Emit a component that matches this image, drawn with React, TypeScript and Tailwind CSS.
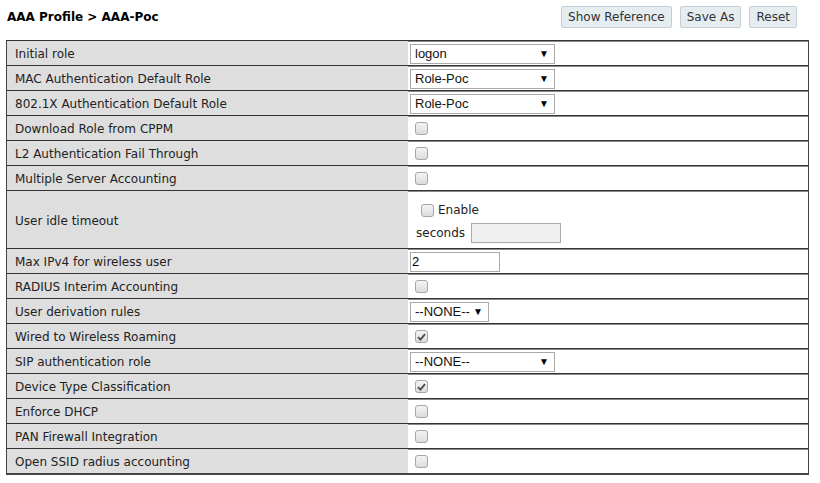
import React from 'react';

type Kind =
  | { t: 'select'; value: string; w: number }
  | { t: 'check'; checked?: boolean }
  | { t: 'input'; value: string }
  | { t: 'idle' };

const rows: { label: string; kind: Kind }[] = [
  { label: 'Initial role', kind: { t: 'select', value: 'logon', w: 145 } },
  { label: 'MAC Authentication Default Role', kind: { t: 'select', value: 'Role-Poc', w: 145 } },
  { label: '802.1X Authentication Default Role', kind: { t: 'select', value: 'Role-Poc', w: 145 } },
  { label: 'Download Role from CPPM', kind: { t: 'check' } },
  { label: 'L2 Authentication Fail Through', kind: { t: 'check' } },
  { label: 'Multiple Server Accounting', kind: { t: 'check' } },
  { label: 'User idle timeout', kind: { t: 'idle' } },
  { label: 'Max IPv4 for wireless user', kind: { t: 'input', value: '2' } },
  { label: 'RADIUS Interim Accounting', kind: { t: 'check' } },
  { label: 'User derivation rules', kind: { t: 'select', value: '--NONE--', w: 79 } },
  { label: 'Wired to Wireless Roaming', kind: { t: 'check', checked: true } },
  { label: 'SIP authentication role', kind: { t: 'select', value: '--NONE--', w: 145 } },
  { label: 'Device Type Classification', kind: { t: 'check', checked: true } },
  { label: 'Enforce DHCP', kind: { t: 'check' } },
  { label: 'PAN Firewall Integration', kind: { t: 'check' } },
  { label: 'Open SSID radius accounting', kind: { t: 'check' } },
];

function Checkbox({ checked }: { checked?: boolean }) {
  return (
    <span className="inline-flex h-[13px] w-[13px] items-center justify-center rounded-[3px] border border-[#a6a6a6] bg-gradient-to-b from-[#f4f4f4] to-[#dcdcdc]">
      {checked && (
        <svg width="9" height="8" viewBox="0 0 9 8">
          <path d="M1 4.2 L3.4 6.6 L8 1.2" fill="none" stroke="#4a4a4a" strokeWidth="1.8" />
        </svg>
      )}
    </span>
  );
}

function Select({ value, w }: { value: string; w: number }) {
  return (
    <div
      className="flex h-[20px] items-center justify-between border border-[#a9a9a9] bg-white pl-[4px] pr-[5px] text-[13px] text-[#111] font-['Liberation_Sans',Arial,sans-serif]"
      style={{ width: w }}
    >
      <span className="leading-none">{value}</span>
      <span className="text-[10px] leading-none text-black">▼</span>
    </div>
  );
}

function Value({ kind }: { kind: Kind }) {
  if (kind.t === 'select') return <Select value={kind.value} w={kind.w} />;
  if (kind.t === 'check')
    return (
      <div className="flex pl-[5px]">
        <Checkbox checked={kind.checked} />
      </div>
    );
  if (kind.t === 'input')
    return (
      <div className="flex h-[20px] w-[90px] items-center border border-[#a9a9a9] bg-white pl-[1px] text-[13px] text-black font-['Liberation_Sans',Arial,sans-serif]">
        {kind.value}
      </div>
    );
  return (
    <div className="flex flex-col gap-[4px] pl-[6px] pt-[4px]">
      <div className="flex items-center gap-[4px] pl-[5px]">
        <Checkbox />
        <span>Enable</span>
      </div>
      <div className="flex items-center gap-[6px]">
        <span>seconds</span>
        <div className="h-[20px] w-[90px] border border-[#a9a9a9] bg-[#f0f0f0]" />
      </div>
    </div>
  );
}

export default function App() {
  return (
    <div className="h-[483px] w-[820px] bg-white text-[12px] text-[#222] font-['DejaVu_Sans',Verdana,sans-serif]">
      <div className="flex items-center justify-between pl-[7px] pr-[23px] pt-[6px]">
        <h1 className="text-[12px] font-bold text-black">AAA Profile &gt; AAA-Poc</h1>
        <div className="flex gap-[8px]">
          {['Show Reference', 'Save As', 'Reset'].map((b) => (
            <button
              key={b}
              className="h-[22px] rounded-[2px] border border-[#c4ced4] bg-[#e5edf1] px-[6px] text-[12px] text-[#333]"
            >
              {b}
            </button>
          ))}
        </div>
      </div>
      <div className="ml-[6px] mt-[12px] w-[803px] border-l border-r border-b-2 border-[#444]">
        {rows.map((r) => (
          <div
            key={r.label}
            className={`grid grid-cols-[401px_1fr] border-t border-[#333] shadow-[inset_0_1px_0_#8a8a8a] ${
              r.kind.t === 'idle' ? 'h-[58px]' : 'h-[25px]'
            }`}
          >
            <div className="flex items-center bg-[#dedede] pl-[8px] pt-[2px]">{r.label}</div>
            <div className="flex items-center pl-[2px] pt-[1px]">
              <Value kind={r.kind} />
            </div>
          </div>
        ))}
      </div>
    </div>
  );
}
